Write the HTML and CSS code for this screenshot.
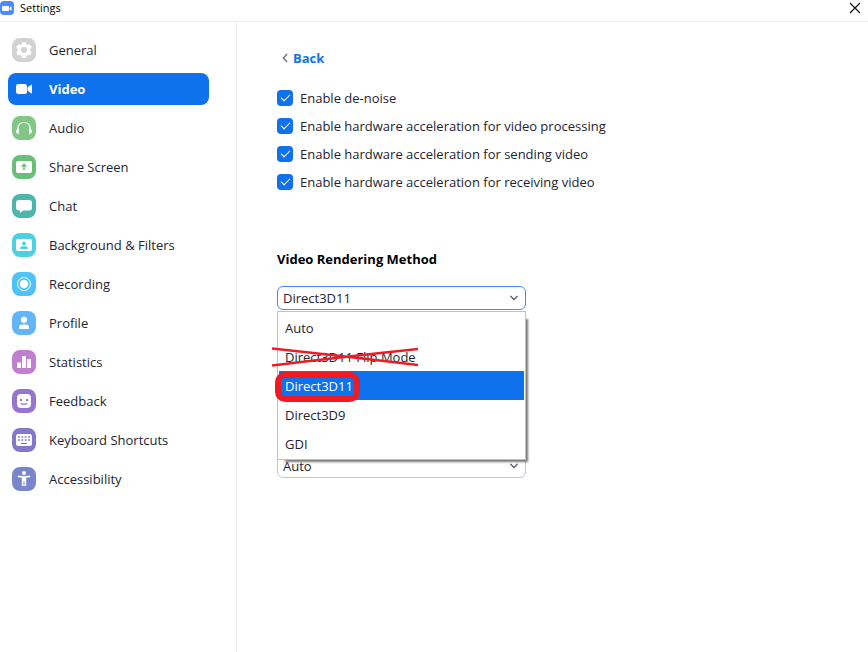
FILE: index.html
```html
<!DOCTYPE html>
<html lang="en">
<head>
<meta charset="utf-8">
<meta name="viewport" content="width=device-width, initial-scale=1">
<title>Settings</title>
<link rel="stylesheet" href="styles.css">
</head>
<body>
<header class="titlebar">
  <svg class="logo" viewBox="0 0 14 14" aria-hidden="true"><rect width="14" height="14" rx="4" fill="#4a8cff"/><rect x="2" y="5" width="7" height="5" rx="1" fill="#fff"/><path d="M9.500 6.800 11.500 5.200V9.800L9.500 8.200Z" fill="#fff"/></svg>
  <h1 class="title">Settings</h1>
  <button class="close" type="button" aria-label="Close"><svg viewBox="0 0 12 12" aria-hidden="true"><path d="M1 1 11 11M11 1 1 11" stroke="#111" stroke-width="1.200"/></svg></button>
</header>
<div class="window">
  <nav class="sidebar" aria-label="Settings sections">
    <button class="item" type="button">
      <svg class="icon" viewBox="0 0 24 24" aria-hidden="true"><rect width="24" height="24" rx="8" fill="#d3d3d3"/><g fill="#fff"><circle cx="12" cy="12" r="6.300"/><rect x="9.800" y="4" width="4.400" height="16" rx="1.500"/><rect x="9.800" y="4" width="4.400" height="16" rx="1.500" transform="rotate(60 12 12)"/><rect x="9.800" y="4" width="4.400" height="16" rx="1.500" transform="rotate(120 12 12)"/></g><circle cx="12" cy="12" r="3" fill="#d3d3d3"/></svg>
      <span>General</span></button>
    <button class="item active" type="button" aria-current="page">
      <svg class="icon" viewBox="0 0 24 24" aria-hidden="true"><rect x="4" y="7" width="11" height="10" rx="2.500" fill="#fff"/><path d="M15.500 10.500 19 7.800Q20 7.200 20 8.300V15.700Q20 16.800 19 16.200L15.500 13.500Z" fill="#fff"/></svg>
      <span>Video</span></button>
    <button class="item" type="button">
      <svg class="icon" viewBox="0 0 24 24" aria-hidden="true"><rect width="24" height="24" rx="8" fill="#82c786"/><path d="M6 15.500V12.500C6 8.500 8.500 6.500 12 6.500S18 8.500 18 12.500V15.500" fill="none" stroke="#fff" stroke-width="1.200"/><path d="M7 12.800V18C5 18 4 17 4 15.500S5 13 7 12.800ZM17 12.800V18C19 18 20 17 20 15.500S19 13 17 12.800Z" fill="#fff"/></svg>
      <span>Audio</span></button>
    <button class="item" type="button">
      <svg class="icon" viewBox="0 0 24 24" aria-hidden="true"><rect width="24" height="24" rx="8" fill="#67bf78"/><rect x="4" y="6" width="16" height="12" rx="2" fill="#fff"/><path d="M12 15V9.500M9.700 11.500 12 9.200 14.300 11.500" fill="none" stroke="#67bf78" stroke-width="1.500"/></svg>
      <span>Share Screen</span></button>
    <button class="item" type="button">
      <svg class="icon" viewBox="0 0 24 24" aria-hidden="true"><rect width="24" height="24" rx="8" fill="#4db6ac"/><path d="M7 6H17Q20 6 20 9V13.500Q20 16.500 17 16.500H11L8 19V16.500H7Q4 16.500 4 13.500V9Q4 6 7 6Z" fill="#fff"/></svg>
      <span>Chat</span></button>
    <button class="item" type="button">
      <svg class="icon" viewBox="0 0 24 24" aria-hidden="true"><rect width="24" height="24" rx="8" fill="#4dd0e1"/><rect x="4" y="6" width="16" height="12" rx="2" fill="#fff"/><circle cx="12" cy="10.500" r="1.900" fill="#4dd0e1"/><path d="M8 16Q8 13.300 10.500 13.300H13.500Q16 13.300 16 16Z" fill="#4dd0e1"/></svg>
      <span>Background &amp; Filters</span></button>
    <button class="item" type="button">
      <svg class="icon" viewBox="0 0 24 24" aria-hidden="true"><rect width="24" height="24" rx="8" fill="#4fc3f7"/><circle cx="12" cy="12" r="6.500" fill="none" stroke="#fff"/><circle cx="12" cy="12" r="4.300" fill="#fff"/></svg>
      <span>Recording</span></button>
    <button class="item" type="button">
      <svg class="icon" viewBox="0 0 24 24" aria-hidden="true"><rect width="24" height="24" rx="8" fill="#64b5f6"/><circle cx="12" cy="8.800" r="3.100" fill="#fff"/><path d="M7 17.500V16.500Q7 13.500 10 13.500H14Q17 13.500 17 16.500V17.500Q17 18 16.500 18H7.500Q7 18 7 17.500Z" fill="#fff"/></svg>
      <span>Profile</span></button>
    <button class="item" type="button">
      <svg class="icon" viewBox="0 0 24 24" aria-hidden="true"><rect width="24" height="24" rx="8" fill="#c17fd0"/><path d="M5 12.500H9V18H5ZM10 6H14V18H10ZM15 9H19V18H15Z" fill="#fff"/></svg>
      <span>Statistics</span></button>
    <button class="item" type="button">
      <svg class="icon" viewBox="0 0 24 24" aria-hidden="true"><rect width="24" height="24" rx="8" fill="#9575cd"/><rect x="5" y="5" width="14" height="14" rx="4" fill="#fff"/><path d="M8 10H10V12H8ZM14 10H16V12H14Z" fill="#9575cd"/><path d="M9 14.200Q12 16.500 15 14.200" fill="none" stroke="#9575cd" stroke-width="1.200"/></svg>
      <span>Feedback</span></button>
    <button class="item" type="button">
      <svg class="icon" viewBox="0 0 24 24" aria-hidden="true"><rect width="24" height="24" rx="8" fill="#8578cb"/><rect x="4" y="6" width="16" height="12" rx="2.500" fill="#fff"/><path d="M6 9H18M6 12H18" stroke="#8578cb" stroke-opacity=".7" stroke-width="1.800" stroke-dasharray="2 1.330"/><path d="M9 15.500H15" stroke="#8578cb" stroke-width="1.200"/></svg>
      <span>Keyboard Shortcuts</span></button>
    <button class="item" type="button">
      <svg class="icon" viewBox="0 0 24 24" aria-hidden="true"><rect width="24" height="24" rx="8" fill="#7986cb"/><circle cx="12" cy="6" r="2" fill="#fff"/><path d="M6 8.800 10 9.300H14L18 8.800V10L14 10.600V19H12.700V14.500H11.300V19H10V10.600L6 10Z" fill="#fff" stroke="#fff" stroke-width=".4"/></svg>
      <span>Accessibility</span></button>
  </nav>
  <main class="content">
    <a class="back" href="#"><svg viewBox="0 0 6 10" aria-hidden="true"><path d="M5 1 1.500 5 5 9" fill="none" stroke="#747487" stroke-width="1.500"/></svg>Back</a>
    <div class="checks">
      <label class="check"><input type="checkbox" checked>Enable de-noise</label>
      <label class="check"><input type="checkbox" checked>Enable hardware acceleration for video processing</label>
      <label class="check"><input type="checkbox" checked>Enable hardware acceleration for sending video</label>
      <label class="check"><input type="checkbox" checked>Enable hardware acceleration for receiving video</label>
    </div>
    <h2 class="heading"><label for="rendering">Video Rendering Method</label></h2>
    <div class="field">
      <select class="select open" id="rendering"><option>Direct3D11</option></select>
      <svg class="chevron" viewBox="0 0 8 6" aria-hidden="true"><path d="M.5 1 4 4.500 7.500 1" fill="none" stroke="#5c5c6b" stroke-width="1.400"/></svg>
      <div class="menu" role="listbox" aria-label="Video Rendering Method">
        <button class="option" type="button" role="option">Auto</button>
        <button class="option" type="button" role="option">Direct3D11 Flip Mode
          <svg class="cross" viewBox="0 0 146 20" aria-hidden="true"><path d="M0 1.500Q70 9 146 18M0 18.500Q70 10 146 2" fill="none" stroke="#ed1c24" stroke-width="2.500"/></svg></button>
        <button class="option selected" type="button" role="option" aria-selected="true">Direct3D11<span class="ring"></span></button>
        <button class="option" type="button" role="option">Direct3D9</button>
        <button class="option" type="button" role="option">GDI</button>
      </div>
    </div>
    <div class="field second">
      <select class="select" aria-label="Method"><option>Auto</option></select>
      <svg class="chevron" viewBox="0 0 8 6" aria-hidden="true"><path d="M.5 1 4 4.500 7.500 1" fill="none" stroke="#5c5c6b" stroke-width="1.400"/></svg>
    </div>
  </main>
</div>
</body>
</html>
```

FILE: styles.css
```css
* { box-sizing: border-box; }
body {
  margin: 0;
  min-height: 100vh;
  display: flex;
  flex-direction: column;
  background: #fff;
  color: #232333;
  font: 13px/20px "Open Sans", "Noto Sans", sans-serif;
}
button, select { font: inherit; color: inherit; }
button { border: 0; padding: 0; background: none; text-align: left; }
svg { display: block; flex: none; }

.titlebar {
  display: flex;
  align-items: center;
  gap: 6px;
  height: 22px;
  padding: 0 7px 6px 0;
  border-bottom: 1px solid #ededf4;
}
.logo { width: 14px; height: 14px; }
.title { margin: 0; font-size: 11px; line-height: 15px; font-weight: 400; color: #000; }
.close { margin-left: auto; }
.close svg { width: 12px; height: 12px; }

.window { flex: 1; display: flex; }
.sidebar {
  width: 237px;
  flex: none;
  display: flex;
  flex-direction: column;
  gap: 7px;
  padding: 12px 27px 12px 8px;
  border-right: 1px solid #ededf4;
}
.item {
  display: flex;
  align-items: center;
  gap: 13px;
  height: 32px;
  padding: 0 4px;
  border-radius: 8px;
}
.icon { width: 24px; height: 24px; }
.active { background: #0e72ed; color: #fff; font-weight: 700; }

.content { flex: 1; padding: 26px 40px; }
.back {
  display: inline-flex;
  align-items: center;
  gap: 5px;
  padding-left: 5px;
  color: #0e72ed;
  font-weight: 700;
  text-decoration: none;
}
.back svg { width: 6px; height: 10px; }
.checks { display: flex; flex-direction: column; gap: 8px; margin-top: 20px; }
.check { display: flex; align-items: center; gap: 7px; }
.check input {
  appearance: none;
  flex: none;
  width: 16px;
  height: 16px;
  margin: 0;
  display: grid;
  place-items: center;
  border-radius: 4px;
  background: #0e72ed;
}
.check input::before {
  content: "";
  width: 8px;
  height: 4px;
  margin-bottom: 3px;
  border: solid #fff;
  border-width: 0 0 1px 1px;
  transform: rotate(-45deg);
}
.heading { margin: 57px 0 17px; font-size: 13px; line-height: 20px; font-weight: 700; color: #000; }

.field { position: relative; width: 249px; max-width: 100%; }
.second { margin-top: 144px; }
.select {
  appearance: none;
  display: block;
  width: 100%;
  height: 24px;
  padding: 0 24px 0 5px;
  border: 1px solid #c6c6d4;
  border-radius: 6px;
  background: #fff;
}
.open { border-color: #3e8ef0; }
.chevron { position: absolute; right: 8px; top: 9px; width: 8px; height: 6px; }
.menu {
  position: absolute;
  z-index: 1;
  top: 25px;
  left: 0;
  width: 100%;
  padding: 1px;
  border: 1px solid #c1c1ce;
  background: #fff;
  box-shadow: 5px 5px 2px -3px #777;
}
.option { position: relative; display: block; width: 100%; height: 29px; padding: 0 6px; }
.selected { background: #0e72ed; color: #fff; }
.cross { position: absolute; left: -7px; top: 5px; width: 146px; height: 20px; }
.ring {
  position: absolute;
  left: -4px;
  top: 1px;
  width: 85px;
  height: 30px;
  border: 6px solid #ed1c24;
  border-radius: 10px;
}
```
